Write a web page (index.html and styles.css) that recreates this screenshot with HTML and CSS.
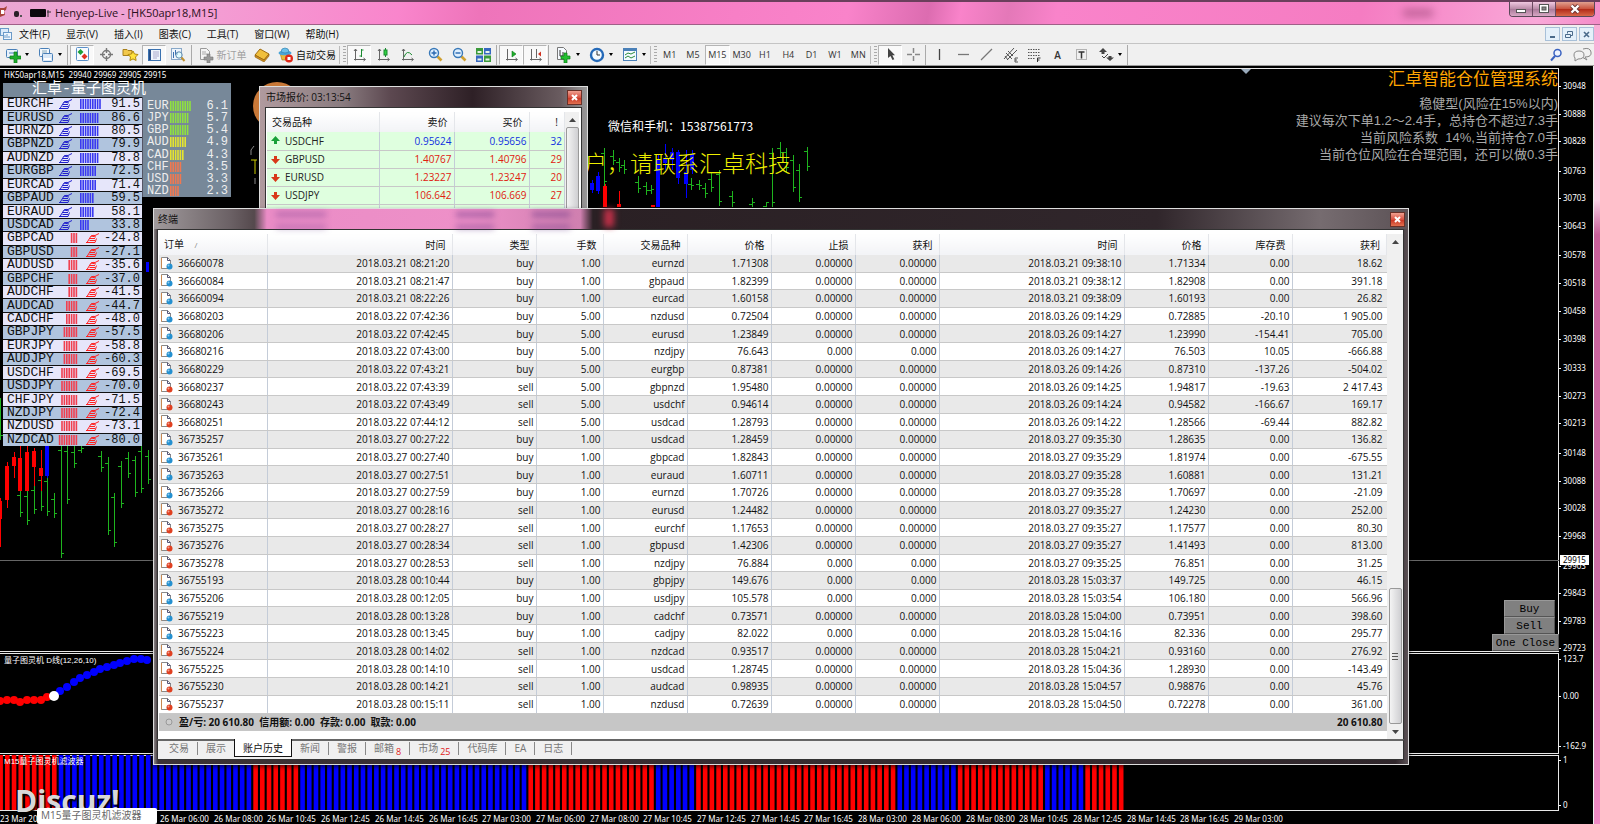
FILE: index.html
```html
<!DOCTYPE html>
<html lang="zh-CN">
<head>
<meta charset="utf-8">
<title>Henyep-Live - [HK50apr18,M15]</title>
<link rel="stylesheet" href="styles.css">
</head>
<body>
<div class="app">
  <header class="titlebar">
    <svg class="app-icon" width="52" height="20" viewBox="0 0 52 20"><path d="M0 5h4l3-2-1 4-2 1 1 4-5 2z" fill="#a8433a"/><path d="M1 7h3v4H1z" fill="#fff"/><rect x="14" y="8" width="5" height="6" rx="2" fill="#2a2028"/><rect x="20" y="12" width="2" height="2" fill="#555"/><rect x="30" y="6" width="16" height="8" rx="1" fill="#0c080c"/><path d="M48 7v7M47 9h4" stroke="#333"/></svg>
    <h1 class="title-text">Henyep-Live - [HK50apr18,M15]</h1>
    <div class="title-ghost"></div>
    <div class="win-controls">
      <button class="wc wc-min" aria-label="最小化"><svg width="12" height="10" viewBox="0 0 12 10"><rect x="1.500" y="5.500" width="9" height="3" fill="#fff" stroke="#555"/></svg></button>
      <button class="wc wc-max" aria-label="还原"><svg width="12" height="10" viewBox="0 0 12 10"><rect x="1.500" y=".5" width="9" height="8" fill="#fff" stroke="#555"/><rect x="4" y="3" width="4" height="3" fill="#888" stroke="#555"/></svg></button>
      <button class="wc wc-close" aria-label="关闭"><svg width="12" height="10" viewBox="0 0 12 10"><path d="M2.500 1.500l7 7M9.500 1.500l-7 7" stroke="#633" stroke-width="4"/><path d="M2.500 1.500l7 7M9.500 1.500l-7 7" stroke="#fff" stroke-width="2.400"/></svg></button>
    </div>
  </header>

  <nav class="menubar">
    <svg width="13" height="14" viewBox="0 0 13 14"><rect x=".5" y="1.500" width="8" height="7" fill="#dcebfa" stroke="#6b9ac8"/><rect x="3.500" y="5.500" width="8" height="7" fill="#eef6ff" stroke="#6b9ac8"/><path d="M5 11V8M7 11V7M9 11V9" stroke="#6b9ac8"/></svg>
    <button>文件(F)</button><button>显示(V)</button><button>插入(I)</button><button>图表(C)</button><button>工具(T)</button><button>窗口(W)</button><button>帮助(H)</button>
    <div class="mdi">
      <button aria-label="最小化"><svg width="9" height="9"><path d="M2 7h5" stroke="#4a6a8a" stroke-width="2"/></svg></button>
      <button aria-label="还原"><svg width="9" height="9" fill="none" stroke="#4a6a8a"><path d="M2.500 3.500v-2h5v4h-2M.5 4.500h5v3h-5z"/></svg></button>
      <button aria-label="关闭"><svg width="9" height="9"><path d="M2 2l5 5M7 2L2 7" stroke="#4a6a8a" stroke-width="1.600"/></svg></button>
    </div>
  </nav>

  <div class="toolbar">
    <button class="tb split" aria-label="新图表"><svg width="17" height="16" viewBox="0 0 17 16"><rect x="2.500" y="2.500" width="11" height="8" rx="1" fill="#e8f2fb" stroke="#4a80b8"/><path d="M5 6h5" stroke="#4a80b8"/><path d="M10 5h3v4h4v3h-4v4h-3v-4H6V9h4z" fill="#1fae2c" stroke="#0b7a18" stroke-width=".7"/></svg><i></i></button>
    <button class="tb split" aria-label="配置文件"><svg width="17" height="16" viewBox="0 0 17 16"><rect x="2.500" y="1.500" width="10" height="8" rx="1" fill="#f3f8fd" stroke="#4a80b8"/><path d="M5 4h5M5 6h5" stroke="#8ab"/><rect x="5.500" y="6.500" width="10" height="8" rx="1" fill="#dbe9f7" stroke="#4a80b8"/><path d="M7 12h7" stroke="#fff" stroke-width="2"/></svg><i></i></button>
    <span class="sep"></span>
    <button class="tb on" aria-label="市场报价"><svg width="15" height="15" viewBox="0 0 15 15"><rect x="1.500" y=".5" width="12" height="13" rx="1" fill="#f8fbff" stroke="#5a90c8"/><path d="M5.500 2l3 3-3 3-3-3z" fill="#1ba038"/><path d="M9.500 6.500l3 3-3 3-3-3z" fill="#e03020"/></svg></button>
    <button class="tb" aria-label="数据窗口"><svg width="15" height="15" viewBox="0 0 15 15" fill="none" stroke="#777" stroke-width="1.400"><circle cx="7.500" cy="7.500" r="4"/><path d="M7.500 1v5M7.500 9v5M1 7.500h5M9 7.500h5"/></svg></button>
    <button class="tb" aria-label="导航"><svg width="17" height="15" viewBox="0 0 17 15"><path d="M1 2.500h4l1 1h4v5H1z" fill="#f2c84a" stroke="#a8801c"/><path d="M11 4l1.500 3 3.500.5-2.500 2.500.6 3.500-3.100-1.600-3.100 1.600.6-3.500L6 7.500 9.500 7z" fill="#ffe23c" stroke="#b08a10"/></svg></button>
    <button class="tb on" aria-label="终端"><svg width="15" height="14" viewBox="0 0 15 14"><rect x="1.500" y="1.500" width="12" height="11" fill="#eef5fc" stroke="#3b72b0"/><path d="M3 2v10" stroke="#274f88" stroke-width="2"/><path d="M6 4h6M6 6h6M6 8h6M6 10h4" stroke="#aac"/></svg></button>
    <button class="tb" aria-label="策略测试"><svg width="16" height="15" viewBox="0 0 16 15"><rect x="1.500" y="1.500" width="10" height="11" fill="#eef5fc" stroke="#88a8c8"/><path d="M3.500 5v6M5.500 3v5M7.500 5v3" stroke="#3b72b0"/><circle cx="9" cy="8" r="3.200" fill="#dff" fill-opacity=".7" stroke="#5d86ac"/><path d="M11.500 10.500l3 3.500" stroke="#c09030" stroke-width="2"/></svg></button>
    <span class="sep"></span>
    <button class="tb wide off"><svg width="16" height="16" viewBox="0 0 16 16"><path d="M2.500 1.500h6l3 3v8h-9z" fill="#f4f4f4" stroke="#999"/><path d="M4 5h4M4 7h5" stroke="#aaa"/><path d="M9 7h3v3h3v3h-3v3H9v-3H6v-3h3z" fill="#999" stroke="#777" stroke-width=".6"/></svg>新订单</button>
    <button class="tb" aria-label="MetaEditor"><svg width="16" height="15" viewBox="0 0 16 15"><path d="M1 8l5-6 9 5-5 6z" fill="#f0bf3c" stroke="#a06c10"/><path d="M1 8v2l9 5 5-6V7l-5 6z" fill="#d09020" stroke="#8a5a0c" stroke-width=".6"/></svg></button>
    <button class="tb auto"><svg width="17" height="16" viewBox="0 0 17 16"><path d="M3 6h9l-1 7H5z" fill="#e9b93a" stroke="#a07818" stroke-width=".6"/><ellipse cx="8" cy="6" rx="6.500" ry="2.300" fill="#49a4d8"/><path d="M4 5q0-4 4-4t4 4q-4 2-8 0z" fill="#6dc0ea" stroke="#2878a8" stroke-width=".6"/><circle cx="12" cy="11.500" r="4" fill="#e02818"/><rect x="10.500" y="10" width="3" height="3" fill="#fff"/></svg>自动交易</button>
    <span class="grip"></span>
    <button class="tb on" aria-label="柱状图"><svg width="15" height="15" viewBox="0 0 15 15" fill="none" stroke="#666"><path d="M3.500 2v11.500M2 12.500h11M11.500 11l2 1.500-2 1.500M2 4l1.500-2L5 4"/><path d="M9.500 2v8M9.500 3h2M7.500 9h2" stroke="#1a8a30"/></svg></button>
    <button class="tb" aria-label="蜡烛图"><svg width="15" height="15" viewBox="0 0 15 15" fill="none" stroke="#666"><path d="M3.500 2v11.500M2 12.500h11M11.500 11l2 1.500-2 1.500M2 4l1.500-2L5 4"/><path d="M9.500 1v9" stroke="#1a8a30"/><rect x="8" y="3" width="3" height="5" fill="#2fd040" stroke="#1a8a30"/></svg></button>
    <button class="tb" aria-label="折线图"><svg width="15" height="15" viewBox="0 0 15 15" fill="none" stroke="#666"><path d="M3.500 2v11.500M2 12.500h11M11.500 11l2 1.500-2 1.500M2 4l1.500-2L5 4"/><path d="M4 10q3-8 8-2" stroke="#1a8a30"/></svg></button>
    <span class="gap"></span>
    <button class="tb" aria-label="放大"><svg width="15" height="15" viewBox="0 0 15 15"><path d="M9.500 9.500l4 4" stroke="#d0a030" stroke-width="2.600"/><circle cx="6" cy="6" r="4.500" fill="#dff0ff" stroke="#3878b8" stroke-width="1.400"/><path d="M6 3.500v5M3.500 6h5" stroke="#2a68b0" stroke-width="1.400"/></svg></button>
    <button class="tb" aria-label="缩小"><svg width="15" height="15" viewBox="0 0 15 15"><path d="M9.500 9.500l4 4" stroke="#d0a030" stroke-width="2.600"/><circle cx="6" cy="6" r="4.500" fill="#dff0ff" stroke="#3878b8" stroke-width="1.400"/><path d="M3.500 6h5" stroke="#2a68b0" stroke-width="1.400"/></svg></button>
    <button class="tb" aria-label="平铺窗口"><svg width="15" height="14" viewBox="0 0 15 14"><rect x="0" y="0" width="7" height="6.500" fill="#3a9a3a"/><rect x="8" y="0" width="7" height="6.500" fill="#3668c0"/><rect x="0" y="7.500" width="7" height="6.500" fill="#3668c0"/><rect x="8" y="7.500" width="7" height="6.500" fill="#3a9a3a"/><path d="M1.500 4h4M9.500 4h4M1.500 11.500h4M9.500 11.500h4" stroke="#e8f4e8" stroke-width="2"/></svg></button>
    <span class="sep"></span>
    <button class="tb on" aria-label="自动滚动"><svg width="15" height="15" viewBox="0 0 15 15" fill="none" stroke="#666"><path d="M3.500 2v11.500M2 12.500h11M11.500 11l2 1.500-2 1.500"/><path d="M8 4l4 3-4 3z" fill="#1fae2c" stroke="#0b7a18" stroke-width=".6"/></svg></button>
    <button class="tb on" aria-label="图表平移"><svg width="15" height="15" viewBox="0 0 15 15" fill="none" stroke="#666"><path d="M3.500 2v11.500M2 12.500h11M11.500 11l2 1.500-2 1.500M8.500 2v9"/><path d="M13 4.500v5L10 7z" fill="#d03020" stroke="none"/></svg></button>
    <span class="sep"></span>
    <button class="tb split" aria-label="指标"><svg width="17" height="16" viewBox="0 0 17 16"><path d="M2.500.5h6l3 3v9h-9z" fill="#f6faff" stroke="#777"/><path d="M5 3v6h3V5" stroke="#333" fill="none"/><path d="M9 6h3v3h3v3h-3v4H9v-4H6V9h3z" fill="#22c030" stroke="#0b7a18" stroke-width=".7"/></svg><i></i></button>
    <button class="tb split" aria-label="周期"><svg width="16" height="16" viewBox="0 0 16 16"><circle cx="8" cy="8" r="6" fill="#f4faff" stroke="#2469b8" stroke-width="2.400"/><path d="M8 4v4h3" stroke="#333" fill="none"/></svg><i></i></button>
    <button class="tb split" aria-label="模板"><svg width="16" height="15" viewBox="0 0 16 15"><rect x="1.500" y="1.500" width="13" height="12" fill="#f4faff" stroke="#4a80b8"/><path d="M2 3h12" stroke="#4a80b8" stroke-width="2"/><path d="M3 8l3-2 3 1 4-2M3 11l3-2 3 2 4-2" stroke="#2a8a3a" fill="none"/></svg><i></i></button>
    <span class="grip"></span>
    <div class="periods">
      <button class="tb">M1</button><button class="tb">M5</button><button class="tb on">M15</button><button class="tb">M30</button><button class="tb">H1</button><button class="tb">H4</button><button class="tb">D1</button><button class="tb">W1</button><button class="tb">MN</button>
    </div>
    <span class="grip"></span>
    <div class="cursors">
      <button class="tb on" aria-label="光标"><svg width="13" height="15" viewBox="0 0 13 15"><path d="M4 1v10l2.500-2 2 4 1.800-.8-2-4H11z" fill="#444"/></svg></button>
      <button class="tb" aria-label="十字准线"><svg width="15" height="15" viewBox="0 0 15 15"><path d="M7.500 1v5M7.500 9v5M1 7.500h5M9 7.500h5" stroke="#888" stroke-width="1.500"/></svg></button>
    </div>
    <span class="sep"></span>
    <div class="drawing">
      <button class="tb" aria-label="垂直线"><svg width="15" height="15"><path d="M7.500 2v11" stroke="#444" stroke-width="1.300"/></svg></button>
      <button class="tb" aria-label="水平线"><svg width="15" height="15"><path d="M2 7.500h11" stroke="#777" stroke-width="1.300"/></svg></button>
      <button class="tb" aria-label="趋势线"><svg width="15" height="15"><path d="M2 13L13 2" stroke="#777" stroke-width="1.300"/></svg></button>
      <button class="tb" aria-label="等距通道"><svg width="16" height="16" viewBox="0 0 16 16" fill="none" stroke="#555"><path d="M1 12L11 1M4 13L14 3M3 6l6 6M5 4l5 5M2 9l3 4"/><path d="M15 11h-3v4h3M12 13h2"/></svg></button>
      <button class="tb" aria-label="斐波纳契"><svg width="16" height="16" viewBox="0 0 16 16"><path d="M2 2.500h12M2 5.500h12M2 8.500h12M2 11.500h7" stroke="#555" stroke-dasharray="1.500 1"/><path d="M11.500 15v-4h3M11.500 13h2" stroke="#333" fill="none"/></svg></button>
      <button class="tb txt">A</button>
      <button class="tb" aria-label="文本标签"><svg width="15" height="15"><rect x="2.500" y="2.500" width="10" height="10" fill="none" stroke="#777" stroke-dasharray="1 1"/><path d="M4.500 5h6M7.500 5v6.500" stroke="#333" stroke-width="1.500"/></svg></button>
    </div>
    <button class="tb split" aria-label="箭头"><svg width="16" height="16" viewBox="0 0 16 16" fill="#444"><path d="M5 1l4 4H6.500v2h-3V5H1zM12 14l-4-3.500h2.500V9h3v1.500H16z"/><path d="M4 9l2 2 4-4" stroke="#444" fill="none"/></svg><i></i></button>
    <span class="sep"></span>
    <div class="tb-right">
      <button class="tb" aria-label="搜索"><svg width="14" height="14" viewBox="0 0 14 14"><circle cx="8.500" cy="5" r="3.500" fill="#eef4ff" stroke="#3a62c0" stroke-width="1.500"/><path d="M6 8l-4 4.500" stroke="#3a62c0" stroke-width="2"/></svg></button>
      <button class="tb" aria-label="消息"><svg width="20" height="15" viewBox="0 0 20 15" fill="#f2f2f2" stroke="#888"><path d="M11 2q7-2 8 3t-6 5l2 3-5-3"/><path d="M2 8q0-4 5-4t5 4-6 4l-3 2v-3q-1-1-1-3z"/></svg></button>
    </div>
  </div>

  <main class="workspace">
    <section class="pane pane-main"></section><div class="axis" id="axis"></div>
    <section class="pane"></section><div class="axis"></div>
    <section class="pane pane-last"></section><div class="axis"></div>
    <div class="timeline" id="timeline"></div>

    <svg class="plot" id="plot" viewBox="0 66 1594 758"></svg>

    <p class="label symbol">HK50apr18,M15&nbsp; 29940 29969 29905 29915</p>
    <p class="label ind1">量子图灵机 D线(12,26,10)</p>
    <p class="label ind2">M15量子图灵机滤波器</p>
    <p class="contact">微信和手机：15387561773</p>
    <p class="notice">户，请联系汇卓科技</p>

    <div class="advice">
      <h2>汇卓智能仓位管理系统</h2>
      <p>稳健型(风险在15%以内)</p>
      <p>建议每次下单1.2～2.4手，总持仓不超过7.3手</p>
      <p>当前风险系数&nbsp; 14%,当前持仓7.0手</p>
      <p>当前仓位风险在合理范围，还可以做0.3手</p>
    </div>

    <div class="trade">
      <button class="narrow">Buy</button><button class="narrow">Sell</button><button>One Close</button>
    </div>

    <div class="strength">
      <h2>汇卓-量子图灵机</h2>
      <div class="strength-body">
        <div class="pairs" id="pairs"></div>
        <div class="currencies" id="currencies"></div>
      </div>
    </div>

    <section class="win market">
      <header class="win-head"><h2>市场报价: 03:13:54</h2><button class="win-x" aria-label="关闭市场报价"><svg width="7" height="7"><path d="M1 1l5 5M6 1L1 6" stroke="#fff" stroke-width="2"/></svg></button></header>
      <div class="win-body">
        <table class="grid quotes">
          <colgroup><col class="q1"><col class="q2"><col class="q2"><col></colgroup>
          <thead><tr><th class="l">交易品种</th><th>卖价</th><th>买价</th><th>!</th></tr></thead>
          <tbody id="quotes"></tbody>
        </table>
        <div class="scroll"><svg class="arrow" width="7" height="4"><path d="M0 4l3.500-4L7 4z"/></svg><div class="thumb"></div></div>
      </div>
    </section>

    <section class="win terminal">
      <header class="win-head">
        <svg class="glass" width="460" height="20" viewBox="0 0 460 20"><g fill="#5a2a80"><path d="M302 3h38v5h-38zM378 3h38v5h-38zM302 16h38v4h-38zM378 16h38v4h-38z" opacity=".5"/><path d="M122 3h50v5h-50zM122 16h50v4h-50z" opacity=".35"/></g><path d="M450 0h14v18h-14z" fill="#c03048"/></svg>
        <h2>终端</h2><button class="win-x" aria-label="关闭终端"><svg width="7" height="7"><path d="M1 1l5 5M6 1L1 6" stroke="#fff" stroke-width="2"/></svg></button>
      </header>
      <div class="win-body">
        <table class="grid orders">
          <colgroup><col class="c1"><col class="c2"><col class="c3"><col class="c4"><col class="c3"><col class="c3"><col class="c3"><col class="c3"><col class="c2"><col class="c3"><col class="c3"><col></colgroup>
          <thead><tr><th class="l">订单 <small>/</small></th><th>时间</th><th>类型</th><th>手数</th><th>交易品种</th><th>价格</th><th>止损</th><th>获利</th><th>时间</th><th>价格</th><th>库存费</th><th>获利</th></tr></thead>
          <tbody id="orders"></tbody>
          <tfoot><tr><td colspan="11" class="l"><svg width="12" height="8"><circle cx="4" cy="4" r="3" fill="#ccc" stroke="#999"/></svg>盈/亏: 20 610.80&nbsp; 信用额: 0.00&nbsp; 存款: 0.00&nbsp; 取款: 0.00</td><td>20 610.80</td></tr></tfoot>
        </table>
        <div class="scroll"><svg class="arrow" width="7" height="4"><path d="M0 4l3.500-4L7 4z"/></svg><div class="thumb low"><span></span></div><svg class="arrow" width="7" height="4"><path d="M0 0l3.500 4L7 0z"/></svg></div>
      </div>
      <nav class="tabs">
        <button>交易</button><button>展示</button><button class="active">账户历史</button><button>新闻</button><button>警报</button><button>邮箱<sub>8</sub></button><button>市场<sub>25</sub></button><button>代码库</button><button>EA</button><button>日志</button>
      </nav>
    </section>

    <div class="watermark">Discuz!</div>
    <div class="tip">M15量子图灵机滤波器</div>
  </main>
</div>
<script src="app.js"></script>
</body>
</html>
```
FILE: styles.css
```css
* { box-sizing: border-box; }
html, body { height: 100%; }
body { margin: 0; overflow: hidden; background: #000; color: #111; font: 10px/12px "Open Sans", "Noto Sans CJK SC", sans-serif; }
h1, h2, p { margin: 0; font-weight: 400; }
button { margin: 0; padding: 0; border: 0; background: none; font: inherit; color: inherit; }
svg { display: block; flex: none; }

.app { display: flex; flex-direction: column; height: 100vh; padding-right: 6px; background: linear-gradient(#f9a8d4, #fbd0e6 200px, #c9609a 235px, #d070a8 600px, #f08cc4); }

.titlebar { display: flex; align-items: center; height: 25px; margin-right: -6px; padding-right: 5px; border-top: 2px solid #6b3f5c; border-bottom: 1px solid #a06088; background: linear-gradient(100deg, #eaa6d2, #f3a0d4 12%, #f985cc 25%, #ee74ba 30%, #f77fc6 46%, #f983ca 53%, #dc6cb0 58%, #f983ca 60%, #e478b8 63%, #f983ca 66%, #f57cc2 85%, #f9a8d8 96%, #f48cc8); }
.title-text { margin-left: 3px; font-size: 11px; line-height: 20px; color: #2a1020; }
.title-ghost { width: 30px; height: 8px; margin: 0 76px 0 auto; background: #8a3a68; opacity: .5; filter: blur(4px); }
.win-controls { display: flex; align-self: flex-start; border: 1px solid #5a4858; border-top: 0; border-radius: 0 0 4px 4px; overflow: hidden; }
.wc { display: flex; align-items: center; justify-content: center; width: 23px; height: 14px; border-right: 1px solid #6a4a60; background: linear-gradient(#f0c8e0, #b88aa6 50%, #a87898 50%, #d8a8c4); }
.wc-close { width: 38px; border: 0; background: linear-gradient(#e0a090, #c8503c 50%, #b02818 50%, #d86848); }

.menubar { display: flex; align-items: center; gap: 16px; height: 18px; background: #f0f0f0; white-space: nowrap; }
.menubar > svg { margin-right: -10px; }
.mdi { display: flex; gap: 2px; margin-left: auto; }
.mdi button { display: flex; align-items: center; justify-content: center; width: 15px; height: 14px; border: 1px solid #a8c0d8; background: #e4f0fa; }

.toolbar { display: flex; align-items: center; height: 23px; border-top: 1px solid #c4c4c4; border-bottom: 1px solid #999; background: #f0f0f0; white-space: nowrap; }
.tb { display: flex; flex: none; align-items: center; justify-content: center; width: 24px; height: 20px; }
.tb.on { border: 1px solid #b4b4b4; border-right-color: #fff; border-bottom-color: #fff; background: #f9f9f9; }
.split { width: 33px; gap: 4px; }
.split i { border: 2px solid transparent; border-top: 3px solid #000; border-bottom: 0; }
.wide { width: 56px; gap: 3px; }
.off { color: #a0a0a0; }
.auto { width: 65px; gap: 2px; }
.sep { flex: none; width: 4px; height: 20px; border-left: 1px solid #aaa; margin-left: 1px; margin-right: -1px; }
.gap { flex: none; width: 4px; }
.grip { flex: none; width: 8px; height: 18px; border-left: 1px solid #bbb; background: repeating-linear-gradient(#aaa 0 1px, transparent 1px 3px) 3px 0 / 3px 100% no-repeat; }
.periods { display: flex; width: 212px; color: #333; font-size: 9px; }
.cursors { display: flex; width: 46px; }
.drawing { display: flex; width: 165px; }
.periods .tb, .cursors .tb, .drawing .tb { flex: 1 1 0; width: auto; }
.txt { color: #333; font-weight: 600; }
.tb-right { display: flex; gap: 2px; margin-left: auto; }

.workspace { position: relative; display: grid; flex: 1; grid-template-columns: 1fr 34px; grid-template-rows: 584px 102px 1fr 13px; min-height: 0; padding-top: 2px; border-right: 1px solid #eee; background: #000; color: #fff; overflow: hidden; }
.pane { border: 1px solid #e8e8e8; border-left: 0; }
.pane + .axis + .pane { margin-top: 1px; }
.axis { position: relative; font: 8px/10px "Noto Sans", sans-serif; }
.axis span { position: absolute; left: 4px; white-space: nowrap; }
.axis span::before { content: ""; position: absolute; left: -4px; top: 5px; width: 2px; height: 1px; background: #fff; }
.axis .now { left: 1px; padding: 0 3px; background: #fff; color: #000; }
.timeline { position: relative; grid-column: 1 / 3; font: 8px/11px "Noto Sans", sans-serif; }
.timeline span { position: absolute; top: 2px; white-space: nowrap; }
.plot { position: absolute; left: 0; top: 0; width: 1594px; height: 758px; }

.label, .contact, .notice { position: absolute; left: 4px; white-space: nowrap; }
.label { font: 8px/10px "Liberation Sans", "Noto Sans CJK SC", sans-serif; }
.symbol { top: 4px; font: 8px/10px "Noto Sans", sans-serif; }
.ind1 { top: 590px; }
.ind2 { top: 691px; }
.contact { left: 608px; top: 51px; font: 12px/18px "Noto Sans CJK SC", sans-serif; }
.notice { left: 584px; top: 82px; color: #ee0; font: 300 23px/28px "Noto Sans CJK SC", sans-serif; }

.advice { position: absolute; top: 3px; right: 35px; color: #a8a8a8; text-align: right; font: 13px/17px "Liberation Sans", "Noto Sans CJK SC", sans-serif; font-weight: 300; }
.advice h2 { margin-bottom: 4px; color: #ffa500; font-size: 17px; line-height: 22px; }

.trade { position: absolute; top: 534px; right: 34px; display: flex; flex-direction: column; align-items: flex-end; }
.trade button { width: 67px; height: 17px; border: 1px solid #999; border-right-color: #555; border-bottom-color: #555; background: #808080; color: #000; font: 11px/14px "Liberation Mono", monospace; }
.trade .narrow { width: 51px; margin-right: 4px; }

.strength { position: absolute; left: 3px; top: 17px; width: 228px; color: #fff; font: 12px/12px "Liberation Mono", monospace; }
.strength h2 { padding-left: 29px; background: #778899; font: 15px/14px "Liberation Mono", "Noto Sans CJK SC", monospace; }
.strength-body { display: flex; align-items: flex-start; }
.pairs { display: grid; grid-auto-rows: 1fr; width: 139px; height: 349px; color: #111; }
.pair { display: grid; grid-template-columns: 52px 21px 24px 1fr; align-items: center; padding: 0 2px 0 4px; border-top: 1px solid #111; background: #e6e6fa; }
.pair.short { grid-template-columns: 49px 30px 15px 1fr; }
.pair:nth-child(even) { background: #b0c4de; }
.pair span { font-size: 13px; }
.pair b { font-weight: 400; text-align: right; }
.currencies { display: grid; grid-auto-rows: 1fr; width: 89px; height: 100px; padding: 3px 3px 0 4px; border-left: 1px solid #556; background: #778899; }
.cur { display: flex; align-items: center; gap: 1px; color: #eee; }
.cur b { margin-left: auto; font-weight: 400; }

.win { position: absolute; display: flex; flex-direction: column; border: 1px solid #ddd; color: #111; }
.win h2 { font-size: 10px; }
.win-head { position: relative; display: flex; align-items: center; justify-content: space-between; height: 20px; padding: 0 3px 0 4px; }
.win-x { display: flex; align-items: center; justify-content: center; width: 15px; height: 15px; border: 1px solid #6a3028; background: linear-gradient(#f0a090, #d85040 50%, #c83020 50%, #e07050); }
.glass { position: absolute; left: 0; top: 0; filter: blur(3px); }
.win-body { display: flex; align-items: stretch; border: 1px solid #333; background: #fff; }
.market { left: 259px; top: 20px; width: 329px; padding: 0 5px; background: linear-gradient(90deg, #b09a9e, #8a7c80 25%, #5c4850 40%, #2e2026 65%, #6a5c60 92%, #999); }
.market .win-head { margin: 0 -3px; }
.market .win-body { padding: 4px 2px 0 1px; height: 140px; overflow: hidden; }
.terminal { left: 153px; right: 184px; top: 142px; padding: 0 4px 4px 3px; background: linear-gradient(90deg, #8a8486, #3c3236 4px, #30262b 99%, #5c5256); box-shadow: 0 2px 4px rgba(0, 0, 0, .6); }
.terminal .win-head { margin: 0 -4px 0 -3px; background: linear-gradient(90deg, #a09a9c, #6c6266 6%, #55494d 8%, #ea8cc6 9%, #ee90c8 25%, #d080b0 34%, #2a2024 35%, #30262b 80%, #766c70 93%, #5c5256); }
.terminal .win-body { padding: 4px 0 0 1px; border-bottom: 0; }

.grid { flex: 1; border-collapse: collapse; table-layout: fixed; text-align: right; white-space: nowrap; }
.grid th { height: 21px; padding: 0 6px 0 5px; font-weight: 400; border-right: 1px solid #e4e6ea; background: linear-gradient(#fff, #f2f3f6); }
.grid td { padding: 0 2px; border-right: 1px solid #c4ccd8; border-bottom: 1px solid #c8c8c8; }
.grid .l { text-align: left; }
.grid small { margin-left: 8px; color: #888; font-size: 8px; }
.orders { height: 497px; margin-bottom: 8px; }
.orders td:last-child { padding-right: 4px; border-right: 0; }
.orders tbody tr:nth-child(odd) { background: #e9e9e9; }
.orders .doc, .quotes .sym { display: flex; align-items: center; gap: 5px; }
.orders tfoot td { height: 18px; border: 0; background: #c6c6c6; font-weight: 700; }
.orders tfoot svg { display: inline-block; margin: 0 2px 0 4px; }
.c1 { width: 108px; } .c2 { width: 185px; } .c3 { width: 84px; } .c4 { width: 67px; }
.quotes { align-self: flex-start; }
.quotes th { height: 20px; }
.quotes td { height: 18px; }
.quotes tbody { background: #dfffdf; }
.quotes .up { color: #1030e0; } .quotes .down { color: #e02010; }
.q1 { width: 112px; } .q2 { width: 75px; }
.quotes .sym { padding-left: 2px; color: #222; }

.scroll { display: flex; flex-direction: column; align-items: center; width: 16px; background: #f0f0f0; }
.market .scroll { width: 14px; }
.arrow { margin: 6px 0 5px; fill: #444; }
.thumb { width: 13px; flex: 1; border: 1px solid #999; border-radius: 2px; background: linear-gradient(90deg, #f4f4f4, #cfcfd2); }
.thumb.low { display: flex; flex: none; align-items: center; justify-content: center; height: 136px; margin-top: auto; }
.thumb span { width: 6px; height: 7px; background: repeating-linear-gradient(#555 0 1px, transparent 1px 3px); }

.tabs { display: flex; height: 21px; padding-left: 3px; border: 1px solid #333; border-top: 2px solid #666; background: #f0f0f0; color: #777; }
.tabs button { position: relative; height: 14px; padding: 0 9px 0 8px; }
.tabs button::after { content: ""; position: absolute; right: 0; top: 1px; width: 1px; height: 13px; background: #888; }
.tabs .active { margin: -2px 0 0 -1px; height: 18px; padding: 0 8px; border: 1px solid #111; border-top: 0; background: #fff; color: #111; }
.tabs .active::after { display: none; }
.tabs sub { margin-left: 2px; color: #e02020; font-size: 9px; line-height: 1px; }

.watermark { position: absolute; left: 15px; bottom: 6px; color: #d8d8d8; font: 700 30px/34px "Open Sans", sans-serif; text-shadow: 1px 2px 2px #000; }
.tip { position: absolute; left: 37px; bottom: 0; width: 120px; height: 16px; padding-left: 4px; background: #fff; color: #666; font: 10px/15px "Open Sans", "Noto Sans CJK SC", sans-serif; white-space: nowrap; border-radius: 2px; }
```
FILE: app.js
```js
const byId = id => document.getElementById(id);

// Price scale: page y, text
const prices = [[86,'30948'],[114,'30888'],[141,'30828'],[171,'30763'],[198,'30703'],[226,'30643'],[255,'30578'],[283,'30518'],[311,'30458'],[339,'30398'],[368,'30333'],[396,'30273'],[423,'30213'],[453,'30148'],[481,'30088'],[508,'30028'],[536,'29968'],[566,'29903'],[560,'29915','now'],[593,'29843'],[621,'29783'],[648,'29723'],[659,'123.7'],[696,'0.00'],[746,'-162.9'],[760,'1'],[805,'0']];
byId('axis').innerHTML = prices.map(([y, t, c]) => `<span class="${c || ''}" style="top:${y - 73}px">${t}</span>`).join('');

// Time scale
const hours = ['26 Mar 06:00','26 Mar 08:00','26 Mar 10:45','26 Mar 12:45','26 Mar 14:45','26 Mar 16:45','27 Mar 03:00','27 Mar 06:00','27 Mar 08:00','27 Mar 10:45','27 Mar 12:45','27 Mar 14:45','27 Mar 16:45','28 Mar 03:00','28 Mar 06:00','28 Mar 08:00','28 Mar 10:45','28 Mar 12:45','28 Mar 14:45','28 Mar 16:45','29 Mar 03:00'];
byId('timeline').innerHTML = '<span style="left:0px">23 Mar 20:</span>' + hours.map((t, i) => `<span style="left:${Math.round(160 + i * 53.7)}px">${t}</span>`).join('');

// Plot
const rect = (x, y, w, h, f) => `<rect x="${x}" y="${y}" width="${w}" height="${h}" fill="${f}"/>`;
let g = '';
g += '<circle cx="277" cy="106" r="24" fill="#c87838"/><path d="M255 160v14M251 160h6" stroke="#cc0"/><path d="M254 146l-3 4v5M255 178v6" stroke="#888"/>';
g += rect(0, 560, 1559, 1, '#666');
g += '<path d="M1241 69h10l-5 5z" fill="#9ab"/>';
const greens = [[20,491,517],[27,491,525],[34,484,514],[41,476,511],[47,476,516],[54,493,518],[61,446,558],[67,446,504],[74,446,468],[81,446,453],[101,451,472],[108,457,535],[114,493,547],[121,461,508],[128,452,478],[135,456,497],[141,446,493],[148,450,484],
 [0,398,440],[604,148,186],[613,150,165],[619,158,172],[624,160,174],[638,176,193],[646,182,195],[651,185,194],[691,178,190],[699,180,190],[705,183,198],[711,173,192],[719,170,206],[732,191,207],[752,198,207],[766,202,207],[772,148,207],[780,142,157],[786,148,172],[793,155,192],[799,164,202],[807,147,171]];
greens.forEach(([x, a, b], i) => { g += rect(x, a, 1, b - a, '#1eb41e') + rect(x - 3, a + 4 + i % 3, 3, 1, '#1eb41e') + rect(x, b - 5, 3, 1, '#1eb41e'); });
[[0,501,519,498,547],[7,466,500,462,508],[14,457,466,452,478],[20,458,491,446,491],[27,452,491,446,491],[34,451,467,448,486],[41,468,476,450,491],[605,186,207,184,207],[619,204,207,191,207],[653,205,207,205,207]].forEach(([x, a, b, c, d]) => { g += rect(x - 2, a, 4, b - a, '#f00') + rect(x, c, 1, d - c, '#f00'); });
[[47,446,476,446,478],[592,183,190,180,193],[598,176,191,172,194],[658,160,207,155,207],[665,158,163,144,172],[672,152,160,148,170],[678,152,178,150,184],[686,172,184,150,198],[692,154,170,150,174]].forEach(([x, a, b, c, d]) => { g += rect(x - 2, a, 4, b - a, '#00f') + rect(x, c, 1, d - c, '#00f'); });
g += rect(146, 262, 3, 10, '#00f');
// D line dots
[[0,701],[7,700],[14,700],[20,702],[27,700],[34,700],[41,700],[47,697]].forEach(([x, y]) => g += `<circle cx="${x}" cy="${y}" r="4" fill="#f00"/>`);
[[60,691],[67,687],[74,682],[80,678],[87,675],[94,672],[100,669],[107,667],[114,665],[120,663],[127,661],[134,659],[141,659],[147,660]].forEach(([x, y]) => g += `<circle cx="${x}" cy="${y}" r="4" fill="#00f"/>`);
g += '<circle cx="54" cy="696" r="5" fill="#fff"/>';
// Filter columns, colour flips at the listed indices
const flips = [-29, 0, 7, 41, 60, 66, 96, 105, 118, 124];
for (let i = -38; i < 130; i++) g += rect((253.3 + i * 6.71).toFixed(2), 755, 4.6, 55, flips.filter(f => i >= f).length % 2 ? '#00f' : '#f00');
byId('plot').innerHTML = g;

// Strength panel
const ticks = (n, colour, side) => `<svg width="22" height="10">${Array.from({ length: n }, (_, i) => rect((side ? 22 - (i + 1) * 2.4 : i * 2.4).toFixed(1), 0, 1.6, 10, colour)).join('')}</svg>`;
const hand = c => `<svg width="14" height="10" viewBox="0 0 14 10"><path d="M1 9.500L5 3q2-1 4-.5L13 .5M5 3l5 1M4 5.500h5M3.500 7.500H9M0 9.500h9l1.500-4" fill="none" stroke="${c}"/></svg>`;
byId('pairs').innerHTML = [['EURCHF',91.5,9],['EURUSD',86.6,8],['EURNZD',80.5,8],['GBPNZD',79.9,8],['AUDNZD',78.8,8],['EURGBP',72.5,7],['EURCAD',71.4,7],['GBPAUD',59.5,6],['EURAUD',58.1,6],['USDCAD',33.8,4],['GBPCAD',-24.8,3],['GBPUSD',-27.1,3],['AUDUSD',-35.6,4],['GBPCHF',-37,4],['AUDCHF',-41.5,4],['AUDCAD',-44.7,5],['CADCHF',-48,5],['GBPJPY',-57.5,6],['EURJPY',-58.8,6],['AUDJPY',-60.3,6],['USDCHF',-69.5,7],['USDJPY',-70,7],['CHFJPY',-71.5,7],['NZDJPY',-72.4,7],['NZDUSD',-73.1,7],['NZDCAD',-80,8]]
  .map(([s, v, n]) => v > 0 ? `<div class="pair"><span>${s}</span>${hand('#22c')}${ticks(n, '#3a3af0')}<b>${v.toFixed(1)}</b></div>` : `<div class="pair short"><span>${s}</span>${ticks(n, '#f04050', 1)}${hand('#f22')}<b>${v.toFixed(1)}</b></div>`).join('');
byId('currencies').innerHTML = [['EUR','6.1',9,'#8fe040'],['JPY','5.7',8,'#8fe040'],['GBP','5.4',8,'#8fe040'],['AUD','4.9',7,'#e4e430'],['CAD','4.3',6,'#e4e430'],['CHF','3.5',5,'#f07850'],['USD','3.3',5,'#f07850'],['NZD','2.3',4,'#f07850']]
  .map(([s, v, n, c]) => `<div class="cur"><span>${s}</span>${ticks(n, c)}<b>${v}</b></div>`).join('');

// Quotes
byId('quotes').innerHTML = [['USDCHF','0.95624','0.95656',32,1],['GBPUSD','1.40767','1.40796',29],['EURUSD','1.23227','1.23247',20],['USDJPY','106.642','106.669',27],['','','','']]
  .map(([s, a, b, d, up]) => `<tr class="${up ? 'up' : 'down'}"><td><div class="sym">${s && `<svg width="9" height="9"><path d="${up ? 'M4.500 0L9 5H6v3H3V5H0z' : 'M4.500 9L9 4H6V1H3v3H0z'}" fill="${up ? '#18a038' : '#d83818'}"/></svg>`}${s}</div></td><td>${a}</td><td>${b}</td><td>${d}</td></tr>`).join('');

// Account history
const rows = `36660078|2018.03.21 08:21:20|buy|1.00|eurnzd|1.71308|5|2018.03.21 09:38:10|1.71334|0.00|18.62
36660084|2018.03.21 08:21:47|buy|1.00|gbpaud|1.82399|5|2018.03.21 09:38:12|1.82908|0.00|391.18
36660094|2018.03.21 08:22:26|buy|1.00|eurcad|1.60158|5|2018.03.21 09:38:09|1.60193|0.00|26.82
36680203|2018.03.22 07:42:36|buy|5.00|nzdusd|0.72504|5|2018.03.26 09:14:29|0.72885|-20.10|1 905.00
36680206|2018.03.22 07:42:45|buy|5.00|eurusd|1.23849|5|2018.03.26 09:14:27|1.23990|-154.41|705.00
36680216|2018.03.22 07:43:00|buy|5.00|nzdjpy|76.643|3|2018.03.26 09:14:27|76.503|10.05|-666.88
36680229|2018.03.22 07:43:21|buy|5.00|eurgbp|0.87381|5|2018.03.26 09:14:26|0.87310|-137.26|-504.02
36680237|2018.03.22 07:43:39|sell|5.00|gbpnzd|1.95480|5|2018.03.26 09:14:25|1.94817|-19.63|2 417.43
36680243|2018.03.22 07:43:49|sell|5.00|usdchf|0.94614|5|2018.03.26 09:14:24|0.94582|-166.67|169.17
36680251|2018.03.22 07:44:12|sell|5.00|usdcad|1.28793|5|2018.03.26 09:14:22|1.28566|-69.44|882.82
36735257|2018.03.27 00:27:22|buy|1.00|usdcad|1.28459|5|2018.03.27 09:35:30|1.28635|0.00|136.82
36735261|2018.03.27 00:27:40|buy|1.00|gbpcad|1.82843|5|2018.03.27 09:35:29|1.81974|0.00|-675.55
36735263|2018.03.27 00:27:51|buy|1.00|euraud|1.60711|5|2018.03.27 09:35:28|1.60881|0.00|131.21
36735266|2018.03.27 00:27:59|buy|1.00|eurnzd|1.70726|5|2018.03.27 09:35:28|1.70697|0.00|-21.09
36735272|2018.03.27 00:28:16|sell|1.00|eurusd|1.24482|5|2018.03.27 09:35:27|1.24230|0.00|252.00
36735275|2018.03.27 00:28:27|sell|1.00|eurchf|1.17653|5|2018.03.27 09:35:27|1.17577|0.00|80.30
36735276|2018.03.27 00:28:34|sell|1.00|gbpusd|1.42306|5|2018.03.27 09:35:27|1.41493|0.00|813.00
36735278|2018.03.27 00:28:53|sell|1.00|nzdjpy|76.884|3|2018.03.27 09:35:25|76.851|0.00|31.25
36755193|2018.03.28 00:10:44|buy|1.00|gbpjpy|149.676|3|2018.03.28 15:03:37|149.725|0.00|46.15
36755206|2018.03.28 00:12:05|buy|1.00|usdjpy|105.578|3|2018.03.28 15:03:54|106.180|0.00|566.96
36755219|2018.03.28 00:13:28|buy|1.00|cadchf|0.73571|5|2018.03.28 15:04:00|0.73951|0.00|398.60
36755223|2018.03.28 00:13:45|buy|1.00|cadjpy|82.022|3|2018.03.28 15:04:16|82.336|0.00|295.77
36755224|2018.03.28 00:14:02|sell|1.00|nzdcad|0.93517|5|2018.03.28 15:04:21|0.93160|0.00|276.92
36755225|2018.03.28 00:14:10|sell|1.00|usdcad|1.28745|5|2018.03.28 15:04:36|1.28930|0.00|-143.49
36755230|2018.03.28 00:14:21|sell|1.00|audcad|0.98935|5|2018.03.28 15:04:57|0.98876|0.00|45.76
36755237|2018.03.28 00:15:11|sell|1.00|nzdusd|0.72639|5|2018.03.28 15:04:50|0.72278|0.00|361.00`;
byId('orders').innerHTML = rows.split('\n').map(line => {
  const [id, t, type, lots, sym, p, d, ...rest] = line.split('|');
  const zero = (0).toFixed(+d);
  const ball = type === 'buy' ? '#2490d0' : '#e04020';
  const icon = `<svg width="12" height="13" viewBox="0 0 12 13"><path d="M.5.5h6l3 3v8h-9z" fill="#fff" stroke="#888"/><path d="M.5 1v10.500" stroke="#c88850"/><path d="M6.500.5v3h3" fill="none" stroke="#557"/><circle cx="8.500" cy="9.500" r="3" fill="${ball}"/><circle cx="7.500" cy="8.500" r="1" fill="#fff" fill-opacity=".5"/></svg>`;
  return `<tr><td><div class="doc">${icon}${id}</div></td>` + [t, type, lots, sym, p, zero, zero, ...rest].map(v => `<td>${v}</td>`).join('') + '</tr>';
}).join('');
```
